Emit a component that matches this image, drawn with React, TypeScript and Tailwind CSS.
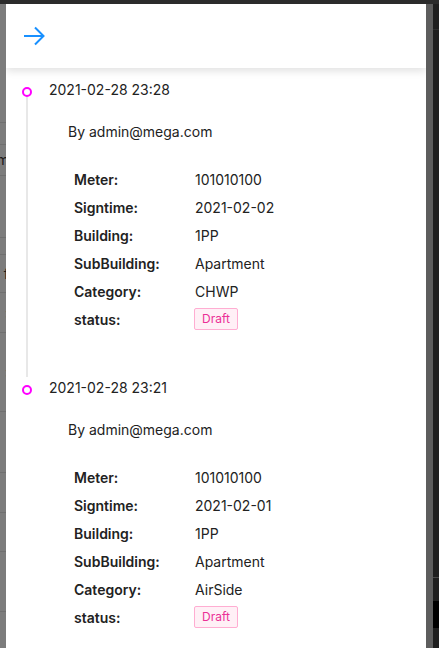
import React from "react"

const font = { fontFamily: "Inter, 'Noto Sans', sans-serif" }

type Entry = {
  time: string
  by: string
  fields: { label: string; value: string }[]
}

const entries: Entry[] = [
  {
    time: "2021-02-28 23:28",
    by: "admin@mega.com",
    fields: [
      { label: "Meter:", value: "101010100" },
      { label: "Signtime:", value: "2021-02-02" },
      { label: "Building:", value: "1PP" },
      { label: "SubBuilding:", value: "Apartment" },
      { label: "Category:", value: "CHWP" },
    ],
  },
  {
    time: "2021-02-28 23:21",
    by: "admin@mega.com",
    fields: [
      { label: "Meter:", value: "101010100" },
      { label: "Signtime:", value: "2021-02-01" },
      { label: "Building:", value: "1PP" },
      { label: "SubBuilding:", value: "Apartment" },
      { label: "Category:", value: "AirSide" },
    ],
  },
]

function ArrowIcon() {
  return (
    <svg width="22" height="20" viewBox="0 0 22 20" fill="none" stroke="#1890ff" strokeWidth="2" strokeLinecap="butt" strokeLinejoin="miter">
      <path d="M1 10H20.5" />
      <path d="M12 1.5L20.5 10L12 18.5" />
    </svg>
  )
}

// dimmed page peeking out on the left of the drawer
function BackdropStrip() {
  const rows = [
    { h: "h-[119px]", t: "" },
    { h: "h-[22px]", t: "" },
    { h: "h-[31px]", t: "m" },
    { h: "h-[62px]", t: "" },
    { h: "h-[17px]", t: "" },
    { h: "h-[38px]", t: "f" },
    { h: "h-[40px]", t: ":" },
    { h: "h-[79px]", t: ":" },
    { h: "h-[61px]", t: "" },
    { h: "h-[40px]", t: "" },
    { h: "h-[39px]", t: "" },
    { h: "h-[60px]", t: "" },
  ]
  return (
    <div className="w-[6px] shrink-0 bg-[#7c7c7c] overflow-hidden flex flex-col">
      {rows.map((r, i) => (
        <div key={i} className={`${r.h} shrink-0 border-b border-[#6f6f6f] flex items-center justify-end`}>
          <span className="text-[14px] text-[#1a1a1a] leading-none -mr-[3px]">{r.t}</span>
        </div>
      ))}
    </div>
  )
}

function TimelineItem({ entry, last }: { entry: Entry; last: boolean }) {
  return (
    <div className="flex h-[298px]">
      <div className="w-[10px] ml-[16px] flex flex-col items-center pt-[8px]">
        <div className="w-[10px] h-[10px] rounded-full border-2 border-[#ff00ff] bg-white shrink-0" />
        {!last && <div className="w-[2px] flex-1 bg-[#e8e8e8]" />}
      </div>
      <div className="ml-[17px] flex flex-col">
        <div className="text-[14px] leading-[22px] text-[#222]">{entry.time}</div>
        <div className="mt-[20px] pl-[19px] text-[14px] leading-[22px] text-[#222]">By {entry.by}</div>
        <div className="mt-[22px] pl-[25px] flex flex-col">
          {entry.fields.map((f) => (
            <div key={f.label} className="h-[28px] flex items-center text-[14px] text-[#222]">
              <span className="w-[121px] font-semibold">{f.label}</span>
              <span>{f.value}</span>
            </div>
          ))}
          <div className="h-[28px] flex items-center text-[14px] text-[#222]">
            <span className="w-[120px] font-semibold">status:</span>
            <span className="h-[22px] px-[7px] border border-[#ffadd2] bg-[#fff0f6] text-[#eb2f96] text-[12px] leading-[20px] rounded-[2px]">
              Draft
            </span>
          </div>
        </div>
      </div>
    </div>
  )
}

export default function App() {
  return (
    <div className="w-[439px] h-[648px] bg-[#2b2b2b] flex flex-col overflow-hidden" style={font}>
      <div className="h-[4px] shrink-0" />
      <div className="flex flex-1 min-h-0">
        <BackdropStrip />

        {/* Drawer */}
        <div className="w-[420px] shrink-0 bg-white flex flex-col overflow-hidden">
          <div className="h-[64px] shrink-0 flex items-center pl-[17px] relative z-10 bg-white shadow-[0_3px_8px_rgba(0,0,0,0.12)]">
            <ArrowIcon />
          </div>
          <div className="flex flex-col pt-[11px]">
            {entries.map((e, i) => (
              <TimelineItem key={e.time} entry={e} last={i === entries.length - 1} />
            ))}
          </div>
        </div>

        {/* scrollbar + dark edge */}
        <div className="w-[7px] shrink-0 bg-[#5d5d5d]" />
        <div className="w-[6px] shrink-0 bg-[#1f1f1f] flex flex-col">
          <div className="h-[26px] border-b border-[#2e2e2e]" />
          <div className="h-[548px] border-b border-[#4a4a4a]" />
          <div className="h-[23px]" />
          <div className="h-[27px] bg-black" />
        </div>
      </div>
    </div>
  )
}
